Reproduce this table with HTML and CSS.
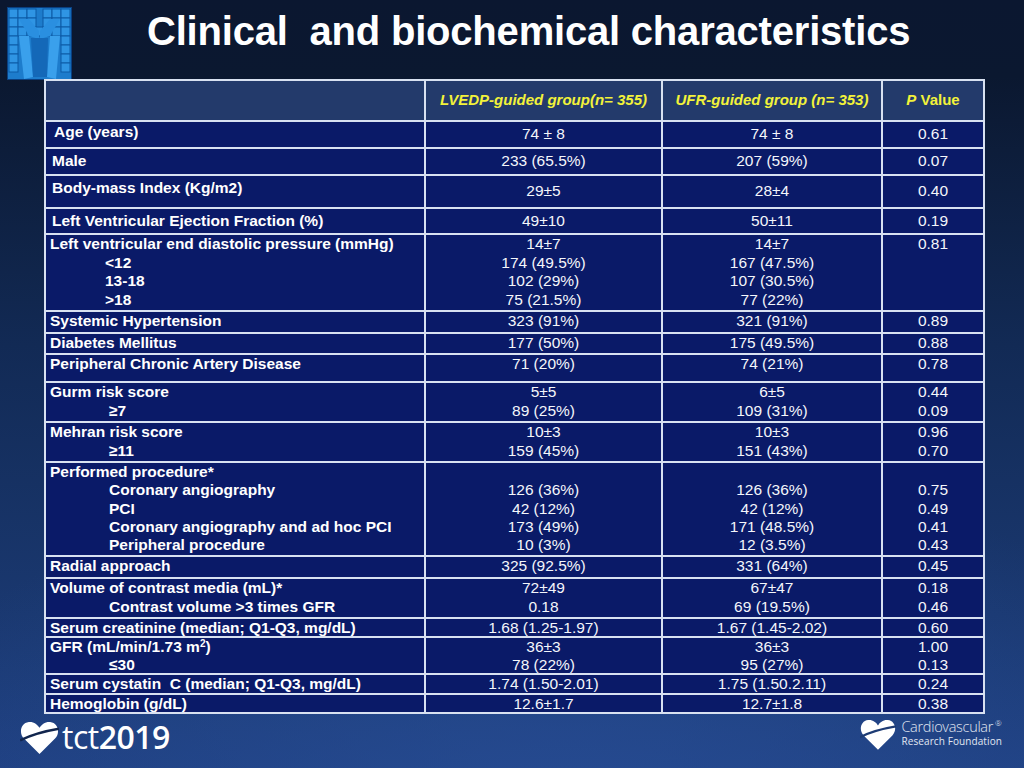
FILE: index.html
```html
<!DOCTYPE html>
<html lang="en">
<head>
<meta charset="utf-8">
<title>Clinical and biochemical characteristics</title>
<link rel="stylesheet" href="styles.css">
</head>
<body>
<div class="slide">
  <header class="top">
    <svg class="mlogo" viewBox="0 0 65 73" width="65" height="73" aria-hidden="true">
      <rect x="0.5" y="0.5" width="64" height="72" fill="#1d7ccc" stroke="#0a3f80"/>
      <g fill="#2f95e4" stroke="#0c5aa6" stroke-width="1">
        <rect x="2" y="2" width="9" height="9"/><rect x="11" y="2" width="9" height="9"/><rect x="20" y="2" width="9" height="9"/>
        <rect x="36" y="2" width="9" height="9"/><rect x="45" y="2" width="9" height="9"/><rect x="54" y="2" width="9" height="9"/>
        <rect x="2" y="11" width="9" height="9"/><rect x="11" y="11" width="9" height="9"/><rect x="20" y="11" width="9" height="9"/>
        <rect x="36" y="11" width="9" height="9"/><rect x="45" y="11" width="9" height="9"/><rect x="54" y="11" width="9" height="9"/>
        <rect x="2" y="20" width="9" height="9"/><rect x="11" y="20" width="9" height="9"/><rect x="20" y="20" width="9" height="9"/>
        <rect x="28" y="20" width="9" height="9"/>
        <rect x="36" y="20" width="9" height="9"/><rect x="45" y="20" width="9" height="9"/><rect x="54" y="20" width="9" height="9"/>
        <rect x="2" y="29" width="9" height="9"/><rect x="54" y="29" width="9" height="9"/>
        <rect x="2" y="38" width="9" height="9"/><rect x="54" y="38" width="9" height="9"/>
        <rect x="2" y="47" width="9" height="9"/><rect x="54" y="47" width="9" height="9"/>
        <rect x="2" y="56" width="9" height="9"/><rect x="54" y="56" width="9" height="9"/>
      </g>
      <polygon points="12,29 22,29 26,70 17,72" fill="#3aa0ec"/>
      <polygon points="43,29 53,29 49,72 40,70" fill="#3aa0ec"/>
      <polygon points="12,12 22,12 32,24 32,32 22,29" fill="#2a8fe0"/>
      <polygon points="53,12 43,12 33,24 33,32 43,29" fill="#2a8fe0"/>
      <polygon points="24,31 41,31 40,70 26,70" fill="#1468b8"/>
    </svg>
    <h1 class="title">Clinical&nbsp; and biochemical characteristics</h1>
  </header>

  <table class="data">
    <colgroup><col class="c1"><col class="c2"><col class="c3"><col class="c4"></colgroup>
    <thead>
      <tr class="hdr"><th></th><th>LVEDP-guided group(n= 355)</th><th>UFR-guided group (n= 353)</th><th><i>P</i> Value</th></tr>
    </thead>
    <tbody>
      <tr class="r-age"><td class="lbl age">Age (years)</td><td class="mid">74 ± 8</td><td class="mid">74 ± 8</td><td class="mid">0.61</td></tr>
      <tr class="r-male"><td class="lbl mid l2">Male</td><td class="mid">233 (65.5%)</td><td class="mid">207 (59%)</td><td class="mid">0.07</td></tr>
      <tr class="r-bmi"><td class="lbl bmi l2">Body-mass Index (Kg/m2)</td><td class="mid">29±5</td><td class="mid">28±4</td><td class="mid">0.40</td></tr>
      <tr class="r-lvef"><td class="lbl mid l2">Left Ventricular Ejection Fraction (%)</td><td class="mid">49±10</td><td class="mid">50±11</td><td class="mid">0.19</td></tr>
      <tr class="r-lvedp"><td class="lbl">Left ventricular end diastolic pressure (mmHg)<br><span class="ind">&lt;12</span><br><span class="ind">13-18</span><br><span class="ind">&gt;18</span></td><td>14±7<br>174 (49.5%)<br>102 (29%)<br>75 (21.5%)</td><td>14±7<br>167 (47.5%)<br>107 (30.5%)<br>77 (22%)</td><td>0.81</td></tr>
      <tr class="r-htn"><td class="lbl">Systemic Hypertension</td><td>323 (91%)</td><td>321 (91%)</td><td>0.89</td></tr>
      <tr class="r-dm"><td class="lbl">Diabetes Mellitus</td><td>177 (50%)</td><td>175 (49.5%)</td><td>0.88</td></tr>
      <tr class="r-pad"><td class="lbl">Peripheral Chronic Artery Disease</td><td>71 (20%)</td><td>74 (21%)</td><td>0.78</td></tr>
      <tr class="r-gurm"><td class="lbl">Gurm risk score<br><span class="ind2">≥7</span></td><td>5±5<br>89 (25%)</td><td>6±5<br>109 (31%)</td><td>0.44<br>0.09</td></tr>
      <tr class="r-mehran"><td class="lbl">Mehran risk score<br><span class="ind2">≥11</span></td><td>10±3<br>159 (45%)</td><td>10±3<br>151 (43%)</td><td>0.96<br>0.70</td></tr>
      <tr class="r-proc"><td class="lbl">Performed procedure*<br><span class="ind2">Coronary angiography</span><br><span class="ind2">PCI</span><br><span class="ind2">Coronary angiography and ad hoc PCI</span><br><span class="ind2">Peripheral procedure</span></td><td>&nbsp;<br>126 (36%)<br>42 (12%)<br>173 (49%)<br>10 (3%)</td><td>&nbsp;<br>126 (36%)<br>42 (12%)<br>171 (48.5%)<br>12 (3.5%)</td><td>&nbsp;<br>0.75<br>0.49<br>0.41<br>0.43</td></tr>
      <tr class="r-radial"><td class="lbl">Radial approach</td><td>325 (92.5%)</td><td>331 (64%)</td><td>0.45</td></tr>
      <tr class="r-vol"><td class="lbl">Volume of contrast media (mL)*<br><span class="ind2">Contrast volume &gt;3 times GFR</span></td><td>72±49<br>0.18</td><td>67±47<br>69 (19.5%)</td><td>0.18<br>0.46</td></tr>
      <tr class="r-creat tight"><td class="lbl">Serum creatinine (median; Q1-Q3, mg/dL)</td><td>1.68 (1.25-1.97)</td><td>1.67 (1.45-2.02)</td><td>0.60</td></tr>
      <tr class="r-gfr"><td class="lbl">GFR (mL/min/1.73 m<sup>2</sup>)<br><span class="ind2">≤30</span></td><td>36±3<br>78 (22%)</td><td>36±3<br>95 (27%)</td><td>1.00<br>0.13</td></tr>
      <tr class="r-cyst tight"><td class="lbl">Serum cystatin&nbsp; C (median; Q1-Q3, mg/dL)</td><td>1.74 (1.50-2.01)</td><td>1.75 (1.50.2.11)</td><td>0.24</td></tr>
      <tr class="r-hgb tight"><td class="lbl">Hemoglobin (g/dL)</td><td>12.6±1.7</td><td>12.7±1.8</td><td>0.38</td></tr>
    </tbody>
  </table>

  <footer class="foot">
    <div class="tct">
      <svg class="heart" viewBox="0 0 40 36" width="39" height="35" aria-hidden="true">
        <path d="M20 35 L4 19 C-1.5 13.5 0.5 3 9 2 C14 1.5 18 4.5 20 8 C22 4.5 26 1.5 31 2 C39.5 3 41.5 13.5 36 19 Z" fill="#ffffff"/>
        <path d="M0 21 C10 16 22 12 40 9" stroke="#11254d" stroke-width="2.6" fill="none"/>
      </svg>
      <span class="tct-word"><span class="tct-light">tct</span>2019</span>
    </div>
    <div class="crf">
      <svg class="heart small" viewBox="0 0 40 36" width="36" height="33" aria-hidden="true">
        <path d="M20 35 L4 19 C-1.5 13.5 0.5 3 9 2 C14 1.5 18 4.5 20 8 C22 4.5 26 1.5 31 2 C39.5 3 41.5 13.5 36 19 Z" fill="#ffffff"/>
        <path d="M0 21 C10 16 22 12 40 9" stroke="#1d3b74" stroke-width="2.6" fill="none"/>
      </svg>
      <div class="crf-text">
        <span class="crf-big">Cardiovascular<sup>®</sup></span>
        <span class="crf-small">Research Foundation</span>
      </div>
    </div>
  </footer>
</div>
</body>
</html>
```

FILE: styles.css
```css
html, body {
  margin: 0;
  padding: 0;
}
body {
  width: 1024px;
  height: 768px;
  overflow: hidden;
  font-family: "Liberation Sans", Arial, sans-serif;
  color: #ffffff;
  background: #0b1730;
}
.slide {
  width: 1024px;
  height: 768px;
  display: flex;
  flex-direction: column;
  background:
    radial-gradient(ellipse 70% 45% at 55% 105%, rgba(40, 78, 150, 0.75) 0%, rgba(40, 78, 150, 0) 100%),
    linear-gradient(180deg, #0b1730 0%, #0b1830 10%, #122a55 45%, #1a3870 80%, #1f4081 100%);
}
.top {
  height: 79px;
  display: flex;
  align-items: flex-start;
  flex-shrink: 0;
}
.mlogo {
  display: block;
  margin: 7px 0 0 7px;
}
.title {
  margin: 8px 0 0 75px;
  font-size: 40px;
  line-height: 46px;
  font-weight: bold;
  color: #ffffff;
  white-space: nowrap;
  letter-spacing: -0.2px;
}
.data {
  margin-left: 44px;
  width: 941px;
  table-layout: fixed;
  border-collapse: collapse;
  font-size: 15.5px;
  line-height: 18.7px;
  flex-shrink: 0;
}
.c1 { width: 380px; }
.c2 { width: 237px; }
.c3 { width: 220px; }
.c4 { width: 102px; }
.data th,
.data td {
  border: 2px solid #d8e1f1;
  padding: 0;
  vertical-align: top;
  text-align: center;
  background: #0a1a68;
  color: #f4f6fb;
}
.data th {
  background: #233a6b;
  color: #f2f23a;
  font-size: 15px;
  font-weight: bold;
  font-style: italic;
  vertical-align: middle;
}
.data th i {
  font-style: italic;
}
.data th:last-child {
  font-style: normal;
}
.data td.lbl {
  text-align: left;
  font-weight: bold;
  padding-left: 4px;
  color: #ffffff;
}
.data td.l2 { padding-left: 6px; }
.data td.age { padding-left: 8px; padding-top: 1px; }
.data td.bmi { padding-left: 6px; padding-top: 3px; }
.data td.mid { vertical-align: middle; }
.ind { padding-left: 55px; }
.ind2 { padding-left: 59px; }
sup {
  font-size: 10px;
  line-height: 0;
  vertical-align: 5px;
}
.hdr { height: 41px; }
.r-age { height: 27px; }
.r-male { height: 27px; }
.r-bmi { height: 33px; }
.r-lvef { height: 26px; }
.r-lvedp { height: 77px; }
.r-htn { height: 22px; }
.r-dm { height: 21px; }
.r-pad { height: 28px; }
.r-gurm { height: 40px; }
.r-mehran { height: 40px; }
.r-proc { height: 94px; }
.r-proc td { line-height: 18.3px; }
.r-radial { height: 22px; }
.r-vol { height: 40px; }
.r-creat { height: 19px; }
.r-gfr { height: 37px; }
.r-gfr td { line-height: 17.5px; }
.r-cyst { height: 20px; }
.r-hgb { height: 19px; }
.tight td { line-height: 17px; }

.foot {
  flex: 1;
  display: flex;
  justify-content: space-between;
  align-items: flex-start;
  padding: 5px 22px 0 20px;
}
.tct {
  display: flex;
  align-items: center;
  gap: 3px;
}
.heart { display: block; }
.tct-word {
  font-family: "Open Sans", "Liberation Sans", sans-serif;
  font-size: 32px;
  line-height: 36px;
  color: #ffffff;
  font-weight: 600;
  letter-spacing: -0.5px;
}
.tct-light { font-weight: 400; }
.crf {
  display: flex;
  align-items: center;
  gap: 5px;
  margin-top: -1px;
}
.crf-text {
  display: flex;
  flex-direction: column;
  color: #e1e7f2;
  padding-bottom: 4px;
}
.crf-big {
  font-family: "Open Sans", "Liberation Sans", sans-serif;
  font-size: 14.5px;
  line-height: 17px;
  font-weight: 300;
  letter-spacing: -0.3px;
  white-space: nowrap;
}
.crf-big sup {
  font-size: 8px;
  line-height: 0;
  vertical-align: 6px;
  margin-left: 2px;
}
.crf-small {
  font-family: "Open Sans", "Liberation Sans", sans-serif;
  font-size: 10px;
  line-height: 12px;
  letter-spacing: 0.1px;
  white-space: nowrap;
}
```
